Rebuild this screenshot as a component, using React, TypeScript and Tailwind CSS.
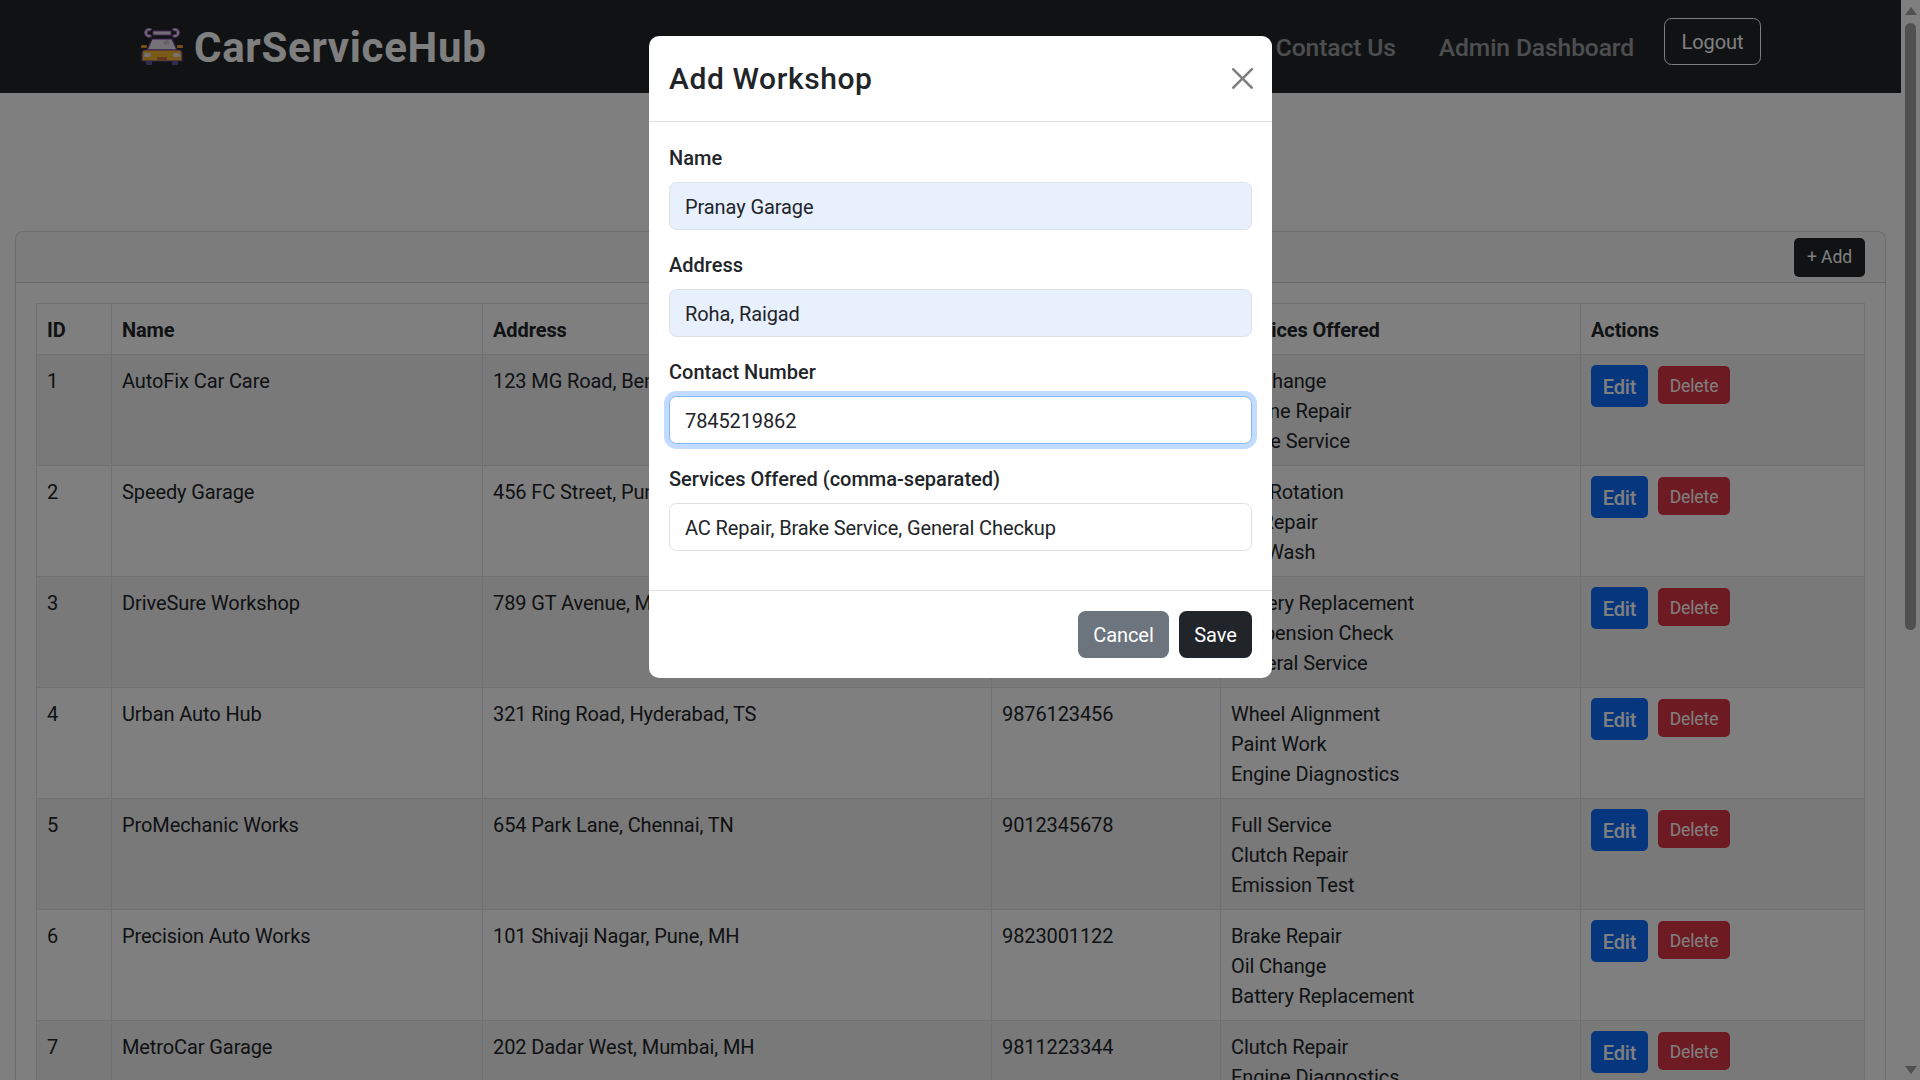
const workshops = [
  { id: 1, name: 'AutoFix Car Care', address: '123 MG Road, Bengaluru, KA', phone: '9876543210', services: ['Oil Change', 'Engine Repair', 'Brake Service'] },
  { id: 2, name: 'Speedy Garage', address: '456 FC Street, Pune, MH', phone: '9123456780', services: ['Tire Rotation', 'AC Repair', 'Car Wash'] },
  { id: 3, name: 'DriveSure Workshop', address: '789 GT Avenue, Mumbai, MH', phone: '9988776655', services: ['Battery Replacement', 'Suspension Check', 'General Service'] },
  { id: 4, name: 'Urban Auto Hub', address: '321 Ring Road, Hyderabad, TS', phone: '9876123456', services: ['Wheel Alignment', 'Paint Work', 'Engine Diagnostics'] },
  { id: 5, name: 'ProMechanic Works', address: '654 Park Lane, Chennai, TN', phone: '9012345678', services: ['Full Service', 'Clutch Repair', 'Emission Test'] },
  { id: 6, name: 'Precision Auto Works', address: '101 Shivaji Nagar, Pune, MH', phone: '9823001122', services: ['Brake Repair', 'Oil Change', 'Battery Replacement'] },
  { id: 7, name: 'MetroCar Garage', address: '202 Dadar West, Mumbai, MH', phone: '9811223344', services: ['Clutch Repair', 'Engine Diagnostics', 'Car Wash'] },
];

function CarLogo() {
  return (
    <svg width="42" height="37" viewBox="0 0 42 37" className="shrink-0">
      <path d="M12 3h18v4H12z" fill="#e6dcec" stroke="#8a55b5" strokeWidth="1" />
      <path d="M11 1.2A4.6 4.6 0 1 0 11 8.3L9 6.5 6.5 6.5V3l2.5 0z" fill="#e6dcec" stroke="#8a55b5" strokeWidth="1" />
      <path d="M31 1.2A4.6 4.6 0 1 1 31 8.3L33 6.5 35.5 6.5V3L33 3z" fill="#e6dcec" stroke="#8a55b5" strokeWidth="1" />
      <rect x="0" y="17" width="6" height="3" rx="1" fill="#f09a30" />
      <rect x="36" y="17" width="6" height="3" rx="1" fill="#f09a30" />
      <path d="M11 11h20l5 11H6z" fill="#e8e4ec" stroke="#6c3f9c" strokeWidth="1.2" />
      <path d="M22 14l5-2 2 4-5 1z" fill="#c9c4d2" />
      <rect x="5" y="32" width="6" height="5" rx="1" fill="#5a5f9a" />
      <rect x="31" y="32" width="6" height="5" rx="1" fill="#5a5f9a" />
      <path d="M4 22h34c2 0 3 2 3 4v7H1v-7c0-2 1-4 3-4z" fill="#f5b52e" stroke="#6c3f9c" strokeWidth="1.2" />
      <rect x="3" y="25" width="7" height="4" rx="2" fill="#e8e4ec" />
      <rect x="32" y="25" width="7" height="4" rx="2" fill="#e8e4ec" />
      <rect x="16" y="29" width="10" height="3" fill="#c9752a" />
    </svg>
  );
}

function Scrollbar() {
  return (
    <div className="flex w-[19px] shrink-0 flex-col items-center bg-white pt-[7px] pb-[6px]">
      <div className="h-0 w-0 border-x-[6px] border-b-[8px] border-x-transparent border-b-[#a0a0a0]" />
      <div className="mt-[8px] mb-auto h-[607px] w-[11px] rounded-full bg-[#a0a0a0]" />
      <div className="h-0 w-0 border-x-[6px] border-t-[8px] border-x-transparent border-t-[#a0a0a0]" />
    </div>
  );
}

function Field({ label, value, tone }: { label: string; value: string; tone: 'filled' | 'focus' | 'plain' }) {
  const toneClass =
    tone === 'filled'
      ? 'border-[#dee2e6] bg-[#e8f0fe]'
      : tone === 'focus'
        ? 'border-[#86b7fe] bg-white shadow-[0_0_0_5px_rgba(13,110,253,0.25)]'
        : 'border-[#dee2e6] bg-white';
  return (
    <div className="mb-[19.5px]">
      <label className="mb-2.5 block pt-[2px] text-[20px] leading-[28px] font-medium tracking-normal text-[#212529]">{label}</label>
      <input
        readOnly
        value={value}
        className={`block h-[47.5px] w-full rounded-[7.5px] border px-[15px] pt-[2px] text-[20px] tracking-[-0.1px] text-[#212529] outline-none ${toneClass}`}
      />
    </div>
  );
}

export default function App() {
  return (
    <div className="relative flex h-[1080px] overflow-hidden bg-white font-['Roboto',sans-serif] text-[20px] leading-[30px] tracking-[-0.1px] text-[#212529]">
      <div className="min-w-0 flex-1">
        <nav className="flex h-[93px] items-center bg-[#212529] pr-[140px] pl-[141px]">
          <CarLogo />
          <span className="mt-[2px] ml-[11px] text-[42px] leading-none font-bold tracking-[0.7px] text-white">CarServiceHub</span>
          <a className="mt-[3px] ml-auto text-[24.6px] font-medium text-white/55">Contact Us</a>
          <a className="mt-[3px] ml-[43px] text-[24.6px] font-medium text-white/55">Admin Dashboard</a>
          <button className="mb-[10px] ml-[30px] h-[47.5px] w-[97px] rounded-[7.5px] border border-white pt-[1px] text-[20px] text-white">Logout</button>
        </nav>

        <main className="mx-[15px] mt-[138px] rounded-t-[8px] border border-black/15">
          <div className="flex h-[51px] items-center justify-end border-b border-black/15 bg-[#212529]/[0.03] pr-[20px]">
            <button className="h-[39px] w-[71px] rounded-[5px] bg-[#212529] text-[17.5px] text-white">+ Add</button>
          </div>
          <div className="px-[20px] pt-[20px]">
            <table className="w-full table-fixed border border-[#dee2e6]">
              <colgroup>
                <col className="w-[75px]" />
                <col className="w-[371px]" />
                <col className="w-[509px]" />
                <col className="w-[229px]" />
                <col className="w-[360px]" />
                <col />
              </colgroup>
              <thead>
                <tr>
                  {['ID', 'Name', 'Address', 'Contact Number', 'Services Offered', 'Actions'].map((h) => (
                    <th key={h} className="border border-[#dee2e6] px-2.5 pt-[11px] pb-[9px] text-left font-bold">
                      {h}
                    </th>
                  ))}
                </tr>
              </thead>
              <tbody>
                {workshops.map((w) => (
                  <tr key={w.id} className="odd:bg-black/5">
                    <td className="border border-[#dee2e6] px-2.5 pt-[11px] pb-[9px] align-top">{w.id}</td>
                    <td className="border border-[#dee2e6] px-2.5 pt-[11px] pb-[9px] align-top">{w.name}</td>
                    <td className="border border-[#dee2e6] px-2.5 pt-[11px] pb-[9px] align-top">{w.address}</td>
                    <td className="border border-[#dee2e6] px-2.5 pt-[11px] pb-[9px] align-top">{w.phone}</td>
                    <td className="border border-[#dee2e6] px-2.5 pt-[11px] pb-[9px] align-top">
                      {w.services.map((s) => (
                        <div key={s}>{s}</div>
                      ))}
                    </td>
                    <td className="border border-[#dee2e6] p-2.5 align-top">
                      <div className="flex items-start gap-[10px]">
                        <button className="h-[42px] w-[57px] rounded-[5px] bg-[#0d6efd] pt-[2px] text-[20px] font-medium text-white">Edit</button>
                        <button className="mt-[1px] h-[38px] w-[72px] rounded-[5px] bg-[#dc3545] pt-[1px] text-[17.5px] text-white">Delete</button>
                      </div>
                    </td>
                  </tr>
                ))}
              </tbody>
            </table>
          </div>
        </main>
      </div>
      <Scrollbar />

      <div className="absolute inset-0 bg-black/50" />

      <div className="absolute top-[36px] left-[649px] w-[623px] rounded-[10px] bg-white">
        <div className="flex h-[86px] items-center justify-between border-b border-[#dee2e6] pr-[19.5px] pl-5">
          <h4 className="text-[30px] leading-[45px] font-medium tracking-[0.6px]">Add Workshop</h4>
          <button className="opacity-50">
            <svg width="21" height="21" viewBox="0 0 16 16" className="block">
              <path d="M.293.293a1 1 0 0 1 1.414 0L8 6.586 14.293.293a1 1 0 1 1 1.414 1.414L9.414 8l6.293 6.293a1 1 0 0 1-1.414 1.414L8 9.414l-6.293 6.293a1 1 0 0 1-1.414-1.414L6.586 8 .293 1.707a1 1 0 0 1 0-1.414" />
            </svg>
          </button>
        </div>
        <div className="px-5 pt-5 pb-5">
          <Field label="Name" value="Pranay Garage" tone="filled" />
          <Field label="Address" value="Roha, Raigad" tone="filled" />
          <Field label="Contact Number" value="7845219862" tone="focus" />
          <Field label="Services Offered (comma-separated)" value="AC Repair, Brake Service, General Checkup" tone="plain" />
        </div>
        <div className="flex h-[88px] items-center justify-end gap-[10px] border-t border-[#dee2e6] px-5">
          <button className="h-[47.5px] w-[91px] rounded-[7.5px] bg-[#6c757d] pt-[1px] text-[20px] text-white">Cancel</button>
          <button className="h-[47.5px] w-[73px] rounded-[7.5px] bg-[#212529] pt-[1px] text-[20px] text-white">Save</button>
        </div>
      </div>
    </div>
  );
}
